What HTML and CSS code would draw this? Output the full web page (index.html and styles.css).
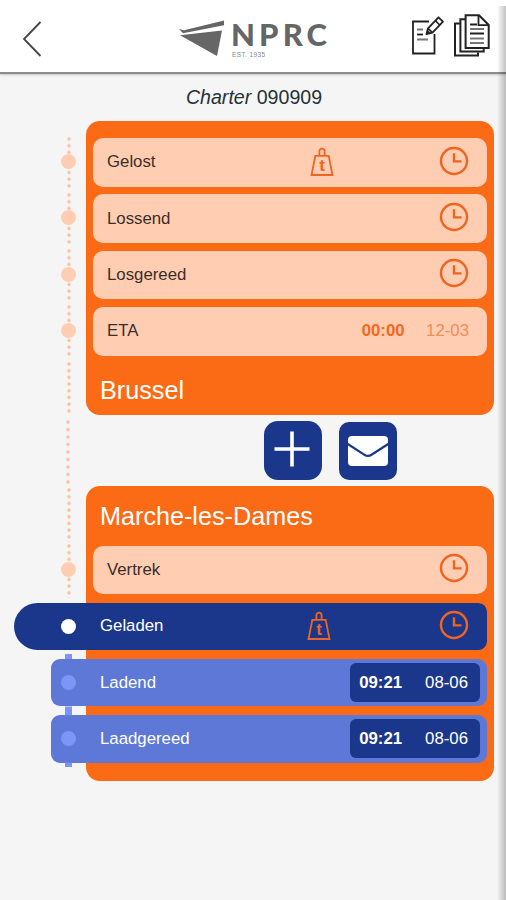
FILE: index.html
```html
<!DOCTYPE html>
<html lang="nl">
<head>
    <meta charset="UTF-8">
    <title>NPRC Charter</title>
    <link rel="stylesheet" href="styles.css">
</head>
<body>
    <svg class="symbols">
        <symbol id="clock" viewBox="0 0 30 30">
            <circle cx="15" cy="15" r="13" fill="none" stroke="currentColor" stroke-width="2.4"/>
            <path d="M15 7.2V15.4H22.5" fill="none" stroke="currentColor" stroke-width="2.4"/>
        </symbol>
        <symbol id="weight" viewBox="0 0 26 30">
            <path d="M6.3 8.8H19.7L23.5 28H2.5Z" fill="none" stroke="currentColor" stroke-width="1.8"/>
            <path d="M10.4 8.5V4.3a2.6 2.6 0 0 1 5.2 0V8.5" fill="none" stroke="currentColor" stroke-width="1.8"/>
            <text x="13.2" y="24.2" text-anchor="middle" class="ton">t</text>
        </symbol>
    </svg>

    <div class="app">
        <header class="header">
            <svg class="back" width="20" height="38" viewBox="0 0 20 38">
                <path d="M18.5 2L2 19L18.5 36" fill="none" stroke="#444" stroke-width="1.8"/>
            </svg>
            <svg class="logo" width="150" height="44" viewBox="0 0 150 44">
                <path d="M1 13L6 14.2L46 4.5V9.2L5 17.2Z" fill="#666"/>
                <path d="M2 19.2L44 14.4L39 40Z" fill="#666"/>
                <text x="53" y="30" textLength="96" class="brand">NPRC</text>
                <text x="54" y="41" textLength="33" class="est">EST. 1935</text>
            </svg>
            <div class="actions">
                <svg width="34" height="42" viewBox="0 0 34 42">
                    <path d="M18 7.5H2V39.5H23.5V20" fill="none" stroke="#222" stroke-width="1.8"/>
                    <path d="M6 15.5H12M6 25.5H17" stroke="#777" stroke-width="1.8"/>
                    <path d="M6 20.5H12" stroke="#222" stroke-width="1.8"/>
                    <path d="M15.5 20L17 14.3L27.5 3.3L32 7.7L21.5 18.6Z" fill="#fff" stroke="#222" stroke-width="1.8" stroke-linejoin="round"/>
                    <path d="M24.3 6.6L28.7 11M17 14.3L21.5 18.6" stroke="#222" stroke-width="1.6"/>
                    <path d="M15 20.6L16.3 15.5L20 19.2Z" fill="#222"/>
                </svg>
                <svg width="38" height="44" viewBox="0 0 38 44">
                    <path d="M7 9.5H2V41.5H25V38.5" fill="none" stroke="#222" stroke-width="2"/>
                    <path d="M12 5.3H7.4V37.6H30.7V34" fill="none" stroke="#222" stroke-width="2"/>
                    <path d="M12.6 1.3H26L35.7 11V34H12.6Z" fill="#fff" stroke="#222" stroke-width="2"/>
                    <path d="M25.5 1.3V11.2H35.7" fill="none" stroke="#222" stroke-width="1.8"/>
                    <path d="M17 10.5H24M17 19.5H31" stroke="#222" stroke-width="1.8"/>
                    <path d="M17 15H31M17 24.5H31M17 29H31" stroke="#777" stroke-width="1.8"/>
                </svg>
            </div>
        </header>

        <h1 class="charter"><em>Charter</em> 090909</h1>

        <main class="route">
            <section class="place place-top">
                <div class="row">
                    <span class="label">Gelost</span>
                    <svg class="weight"><use href="#weight"/></svg>
                    <svg class="clock"><use href="#clock"/></svg>
                </div>
                <div class="row">
                    <span class="label">Lossend</span>
                    <svg class="clock"><use href="#clock"/></svg>
                </div>
                <div class="row">
                    <span class="label">Losgereed</span>
                    <svg class="clock"><use href="#clock"/></svg>
                </div>
                <div class="row">
                    <span class="label">ETA</span>
                    <div class="moment"><b>00:00</b><span class="faded">12-03</span></div>
                </div>
                <h2 class="city">Brussel</h2>
            </section>

            <div class="buttons">
                <button class="button add">
                    <svg width="38" height="38" viewBox="0 0 38 38">
                        <path d="M19 1.5V36.5M1.5 19H36.5" stroke="#fff" stroke-width="3.6"/>
                    </svg>
                </button>
                <button class="button">
                    <svg width="40" height="30" viewBox="0 0 40 30">
                        <rect width="40" height="30" rx="4" fill="#fff"/>
                        <path d="M-1 7.5L16.5 18.8Q20 21 23.5 18.8L41 7.5" fill="none" stroke="#1b378c" stroke-width="2.2"/>
                    </svg>
                </button>
            </div>

            <section class="place place-bottom">
                <h2 class="city">Marche-les-Dames</h2>
                <div class="row">
                    <span class="label">Vertrek</span>
                    <svg class="clock"><use href="#clock"/></svg>
                </div>
                <div class="row current">
                    <span class="label">Geladen</span>
                    <svg class="weight"><use href="#weight"/></svg>
                    <svg class="clock"><use href="#clock"/></svg>
                </div>
                <div class="row done">
                    <span class="label">Ladend</span>
                    <div class="moment"><b>09:21</b><span>08-06</span></div>
                </div>
                <div class="row done">
                    <span class="label">Laadgereed</span>
                    <div class="moment"><b>09:21</b><span>08-06</span></div>
                </div>
            </section>
        </main>
        <div class="edge"></div>
    </div>
</body>
</html>
```
FILE: styles.css
```css
* {
    box-sizing: border-box;
}
body {
    margin: 0;
    background: #f5f5f5;
    font-family: "Liberation Sans", Arial, sans-serif;
    font-size: 16.8px;
    color: #3b2d29;
}
.symbols {
    display: none;
}
.app {
    position: relative;
    height: 900px;
    overflow: hidden;
}
.header {
    display: grid;
    grid-template-columns: 1fr 150px 1fr;
    height: 74px;
    padding: 0 15px 0 22px;
    background: #fff;
    border-bottom: 2px solid #8c8c8c;
    box-shadow: 0 1px 2px rgba(0,0,0,0.2);
}
.back {
    margin-top: 20px;
}
.logo {
    margin-top: 16px;
    margin-left: -4px;
}
.brand {
    font: 900 31px Lato, sans-serif;
    fill: #666;
}
.est {
    font-size: 6.5px;
    fill: #888;
}
.actions {
    display: flex;
    justify-content: flex-end;
    align-items: flex-start;
    gap: 8px;
    padding-top: 14px;
}
.charter {
    margin: 0;
    height: 46.5px;
    padding-left: 2px;
    font-size: 19.6px;
    font-weight: normal;
    line-height: 47px;
    text-align: center;
    color: #263238;
}
.route {
    margin-left: 86px;
    width: 407.5px;
}
.place {
    height: 294.5px;
    padding: 0 6.5px 0 7px;
    background: #fb6a14;
    border-radius: 14px;
}
.place-top {
    padding-top: 17.5px;
}
.row {
    position: relative;
    display: flex;
    align-items: center;
    height: 48.7px;
    margin-bottom: 7.6px;
    padding: 0 18px 0 14px;
    background: #ffcdb2;
    border-radius: 10px;
}
.label {
    flex: 1;
}
.clock {
    width: 30px;
    height: 30px;
    margin-top: -3px;
    color: #ee6420;
}
.weight {
    width: 26px;
    height: 30px;
    margin-top: -1px;
    margin-right: 104px;
    color: #ee6420;
}
.ton {
    font: bold 17px "Liberation Sans", Arial, sans-serif;
    fill: currentColor;
}
.moment {
    display: flex;
    gap: 21.5px;
    color: #f4691e;
}
.faded {
    color: #f58a55;
}
.city {
    position: relative;
    height: 56px;
    margin: 0;
    padding-left: 7px;
    font-size: 25.2px;
    font-weight: normal;
    line-height: 54px;
    color: #fff;
}
.place-bottom .city {
    height: 59.5px;
    line-height: 61px;
}

/* timeline */
.row::before, .city::before, .buttons::before {
    content: "";
    position: absolute;
    left: -26px;
    top: -1.5px;
    width: 4px;
    height: 53.6px;
    background: radial-gradient(circle at 2px 2px, #fbc2a4 1.4px, transparent 2px) 0 0 / 4px 6.7px;
}
.row::after {
    content: "";
    position: absolute;
    left: -32.5px;
    top: 16px;
    width: 15px;
    height: 15px;
    border-radius: 50%;
    background: #ffcdb2;
}
.place-bottom .city::before {
    top: 2px;
}

.buttons {
    position: relative;
    display: flex;
    align-items: center;
    gap: 17px;
    height: 71px;
    padding-left: 177.5px;
}
.buttons::before {
    left: -20px;
    top: 5px;
    height: 66px;
    background-size: 4px 7.5px;
}
.button {
    display: flex;
    align-items: center;
    justify-content: center;
    width: 57.5px;
    height: 58px;
    padding: 0;
    border: none;
    border-radius: 10px;
    background: #1b378c;
}
.add {
    width: 58.5px;
    height: 59px;
    padding-bottom: 4px;
    padding-right: 2px;
    border-radius: 14px;
}

.current {
    height: 47.5px;
    margin-top: 8.4px;
    margin-left: -79px;
    margin-bottom: 8.8px;
    padding-left: 86px;
    background: #1b378c;
    border-radius: 24px 9px 9px 24px;
    color: #fff;
}
.current::before {
    display: none;
}
.current::after {
    left: 46.5px;
    background: #fff;
}
.current .weight {
    margin-right: 107px;
}
.done {
    height: 47.5px;
    margin-left: -42px;
    margin-bottom: 8.8px;
    padding: 0 7px 0 49px;
    background: #5d78d7;
    border-radius: 9px;
    color: #fff;
}
.done::before {
    left: 14px;
    top: -5px;
    width: 7px;
    height: 57px;
    background: #7b95f8;
    /* keeps the bar visible only outside the row */
    clip-path: polygon(0 0, 100% 0, 100% 5px, 0 5px, 0 52.5px, 100% 52.5px, 100% 100%, 0 100%);
}
.done::after {
    left: 9.5px;
    background: #7b95f8;
}
.done .moment {
    height: 39px;
    align-items: center;
    padding: 0 12px 0 9px;
    gap: 23px;
    border-radius: 6px;
    background: #1b378c;
    color: #fff;
}

.edge {
    position: absolute;
    top: 6px;
    right: 0;
    bottom: 0;
    width: 9px;
    background: linear-gradient(to right, rgba(0,0,0,0), rgba(0,0,0,0.24));
}
```
